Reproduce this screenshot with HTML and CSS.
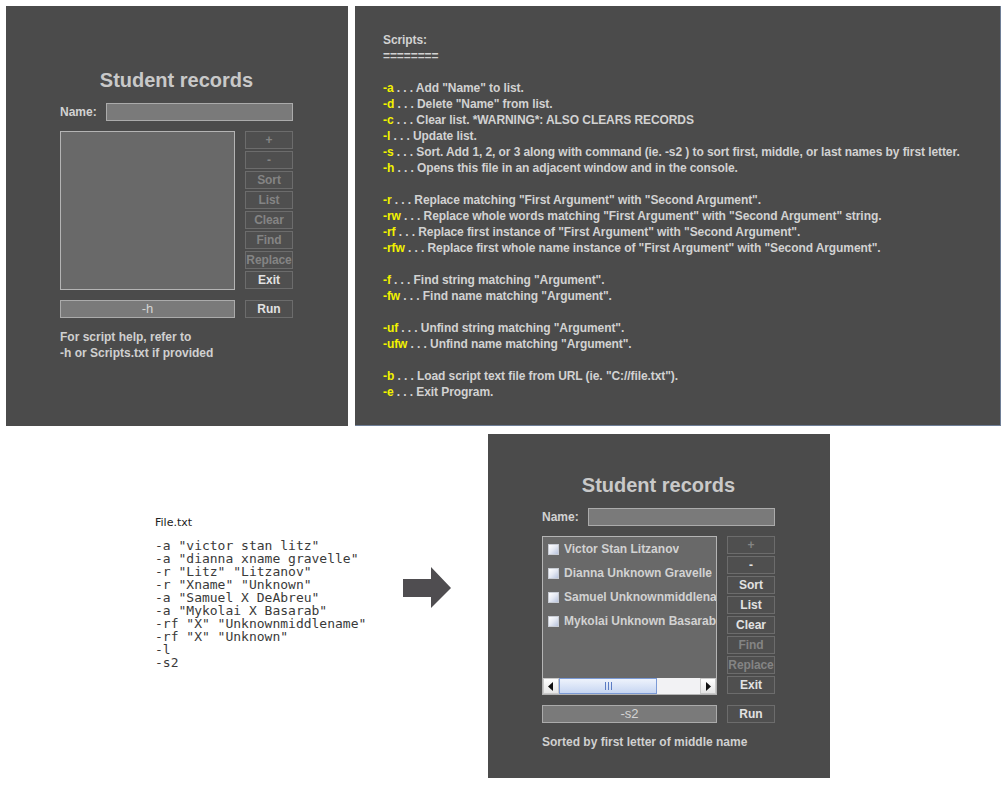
FILE: index.html
```html
<!DOCTYPE html>
<html>
<head>
<meta charset="utf-8">
<link rel="stylesheet" href="styles.css">
</head>
<body>
<div class="top-row">
  <div class="panel app app-first">
    <div class="col">
      <div class="title">Student records</div>
      <div class="name-row">
        <span class="label">Name:</span>
        <div class="field name-field"></div>
      </div>
      <div class="main-row">
        <div class="list"></div>
        <div class="buttons">
          <div class="btn dis">+</div>
          <div class="btn dis">-</div>
          <div class="btn dis">Sort</div>
          <div class="btn dis">List</div>
          <div class="btn dis">Clear</div>
          <div class="btn dis">Find</div>
          <div class="btn dis">Replace</div>
          <div class="btn">Exit</div>
        </div>
      </div>
      <div class="cmd-row">
        <div class="field cmd">-h</div>
        <div class="btn">Run</div>
      </div>
      <div class="msg">For script help, refer to<br>-h or Scripts.txt if provided</div>
    </div>
  </div>
  <div class="panel scripts">
    <div class="sline">Scripts:</div>
    <div class="sline">========</div>
    <div class="sline blank"></div>
    <div class="sline"><span class="flag">-a</span> . . . Add "Name" to list.</div>
    <div class="sline"><span class="flag">-d</span> . . . Delete "Name" from list.</div>
    <div class="sline"><span class="flag">-c</span> . . . Clear list. *WARNING*: ALSO CLEARS RECORDS</div>
    <div class="sline"><span class="flag">-l</span> . . . Update list.</div>
    <div class="sline"><span class="flag">-s</span> . . . Sort. Add 1, 2, or 3 along with command (ie. -s2 ) to sort first, middle, or last names by first letter.</div>
    <div class="sline"><span class="flag">-h</span> . . . Opens this file in an adjacent window and in the console.</div>
    <div class="sline blank"></div>
    <div class="sline"><span class="flag">-r</span> . . . Replace matching "First Argument" with "Second Argument".</div>
    <div class="sline"><span class="flag">-rw</span> . . . Replace whole words matching "First Argument" with "Second Argument" string.</div>
    <div class="sline"><span class="flag">-rf</span> . . . Replace first instance of "First Argument" with "Second Argument".</div>
    <div class="sline"><span class="flag">-rfw</span> . . . Replace first whole name instance of "First Argument" with "Second Argument".</div>
    <div class="sline blank"></div>
    <div class="sline"><span class="flag">-f</span> . . . Find string matching "Argument".</div>
    <div class="sline"><span class="flag">-fw</span> . . . Find name matching "Argument".</div>
    <div class="sline blank"></div>
    <div class="sline"><span class="flag">-uf</span> . . . Unfind string matching "Argument".</div>
    <div class="sline"><span class="flag">-ufw</span> . . . Unfind name matching "Argument".</div>
    <div class="sline blank"></div>
    <div class="sline"><span class="flag">-b</span> . . . Load script text file from URL (ie. "C://file.txt").</div>
    <div class="sline"><span class="flag">-e</span> . . . Exit Program.</div>
  </div>
</div>
<div class="bottom-row">
  <div class="file">
    <div class="file-name">File.txt</div>
    <pre class="code">-a "victor stan litz"
-a "dianna xname gravelle"
-r "Litz" "Litzanov"
-r "Xname" "Unknown"
-a "Samuel X DeAbreu"
-a "Mykolai X Basarab"
-rf "X" "Unknownmiddlename"
-rf "X" "Unknown"
-l
-s2</pre>
  </div>
  <svg class="arrow" width="48" height="41" viewBox="0 0 48 41">
    <polygon points="0,12 28,12 28,0 48,21 28,41 28,30 0,30" fill="#4f4d50"/>
  </svg>
  <div class="panel app app-second">
    <div class="col">
      <div class="title">Student records</div>
      <div class="name-row">
        <span class="label">Name:</span>
        <div class="field name-field"></div>
      </div>
      <div class="main-row">
        <div class="list filled">
          <div class="items">
            <div class="item"><span class="check"></span><span class="item-text">Victor Stan Litzanov</span></div>
            <div class="item"><span class="check"></span><span class="item-text">Dianna Unknown Gravelle</span></div>
            <div class="item"><span class="check"></span><span class="item-text">Samuel Unknownmiddlename DeAbreu</span></div>
            <div class="item"><span class="check"></span><span class="item-text">Mykolai Unknown Basarab</span></div>
          </div>
          <div class="hscroll">
            <div class="sb-btn"><svg width="6" height="9" viewBox="0 0 6 9"><polygon points="5,0 5,9 0,4.5" fill="#111"/></svg></div>
            <div class="sb-thumb"><span class="grip"></span><span class="grip"></span><span class="grip"></span></div>
            <div class="sb-track"></div>
            <div class="sb-btn"><svg width="6" height="9" viewBox="0 0 6 9"><polygon points="1,0 1,9 6,4.5" fill="#111"/></svg></div>
          </div>
        </div>
        <div class="buttons">
          <div class="btn dis">+</div>
          <div class="btn">-</div>
          <div class="btn">Sort</div>
          <div class="btn">List</div>
          <div class="btn">Clear</div>
          <div class="btn dis">Find</div>
          <div class="btn dis">Replace</div>
          <div class="btn">Exit</div>
        </div>
      </div>
      <div class="cmd-row">
        <div class="field cmd">-s2</div>
        <div class="btn">Run</div>
      </div>
      <div class="msg">Sorted by first letter of middle name</div>
    </div>
  </div>
</div>
</body>
</html>
```

FILE: styles.css
```css
* { box-sizing: border-box; }
body {
  margin: 0;
  padding: 6px;
  background: #ffffff;
  font-family: "Liberation Sans", Arial, sans-serif;
  width: 1007px;
  height: 785px;
  overflow: hidden;
}
.top-row {
  display: flex;
  gap: 7px;
  height: 420px;
}
.panel {
  background: #4b4b4b;
  color: #cfcfcf;
}
.app {
  width: 342px;
  padding-left: 54px;
}
.app-first {
  height: 420px;
  padding-top: 62px;
}
.app-second {
  height: 344px;
  padding-top: 39px;
  margin-left: 37px;
}
.col {
  width: 233px;
  display: flex;
  flex-direction: column;
}
.title {
  font-size: 20px;
  font-weight: bold;
  line-height: 24px;
  height: 24px;
  text-align: center;
  color: #c9c9c9;
}
.name-row {
  margin-top: 11px;
  display: flex;
  align-items: center;
  height: 18px;
}
.label {
  font-size: 12px;
  font-weight: bold;
  width: 46px;
  color: #d2d2d2;
}
.field {
  background: #7a7a7a;
  border: 1px solid #ababab;
  height: 18px;
}
.name-field {
  width: 187px;
}
.main-row {
  margin-top: 10px;
  display: flex;
  gap: 10px;
}
.list {
  width: 175px;
  height: 159px;
  background: #696969;
  border: 1px solid #b4b4b4;
  overflow: hidden;
  display: flex;
  flex-direction: column;
}
.buttons {
  width: 48px;
  display: flex;
  flex-direction: column;
  gap: 2px;
}
.btn {
  width: 48px;
  height: 18px;
  border: 1px solid #6c6c6c;
  background: #4f4f4f;
  color: #e2e2e2;
  font-size: 12px;
  font-weight: bold;
  line-height: 16px;
  text-align: center;
  white-space: nowrap;
  overflow: hidden;
}
.btn.dis {
  color: #848484;
  letter-spacing: -0.1px;
}
.cmd-row {
  margin-top: 10px;
  display: flex;
  gap: 10px;
}
.cmd {
  width: 175px;
  font-size: 13px;
  line-height: 16px;
  text-align: center;
  color: #d4d4d4;
}
.msg {
  margin-top: 11px;
  font-size: 12px;
  font-weight: bold;
  line-height: 16px;
  color: #d0d0d0;
}
.scripts {
  width: 646px;
  height: 420px;
  padding: 26px 0 0 28px;
  border-right: 1px solid #6e7e96;
  border-bottom: 1px solid #6e7e96;
}
.sline {
  font-size: 12px;
  font-weight: bold;
  line-height: 16px;
  height: 16px;
  white-space: nowrap;
  letter-spacing: -0.08px;
  color: #d2d2d2;
}
.flag {
  color: #f2f200;
}
.bottom-row {
  margin-top: 8px;
  display: flex;
  align-items: flex-start;
}
.file {
  margin-left: 149px;
  width: 248px;
  margin-top: 82px;
}
.file-name {
  font-family: "DejaVu Sans", sans-serif;
  font-size: 11px;
  line-height: 14px;
  color: #222;
}
.code {
  margin: 9px 0 0 0;
  font-family: "DejaVu Sans Mono", monospace;
  font-size: 13px;
  line-height: 13px;
  color: #3a3a3a;
}
.arrow {
  display: block;
  margin-top: 133px;
}
.items {
  flex: 1;
  min-height: 0;
}
.item {
  height: 24px;
  display: flex;
  align-items: center;
  padding-left: 5px;
  white-space: nowrap;
  overflow: hidden;
}
.check {
  width: 11px;
  height: 11px;
  flex: none;
  border: 1px solid #c8ccd4;
  background: linear-gradient(135deg, #ffffff 0%, #e4e8f2 50%, #b8c4de 100%);
  margin-right: 5px;
}
.item-text {
  display: block;
  min-width: 0;
  overflow: hidden;
  font-size: 12px;
  font-weight: bold;
  color: #d2d2d2;
}
.hscroll {
  height: 16px;
  display: flex;
  background: #f0f0f0;
  flex: none;
}
.sb-btn {
  width: 16px;
  height: 16px;
  background: linear-gradient(#ffffff, #e6e6e6);
  border: 1px solid #c9c9c9;
  display: flex;
  align-items: center;
  justify-content: center;
}
.sb-thumb {
  width: 98px;
  height: 16px;
  background: linear-gradient(#eef3fc, #c7d6f2);
  border: 1px solid #7b9ad6;
  display: flex;
  align-items: center;
  justify-content: center;
  gap: 2px;
}
.grip {
  width: 1px;
  height: 8px;
  background: #5b7cc4;
}
.sb-track {
  flex: 1;
  background: #f2f2f4;
}
```
